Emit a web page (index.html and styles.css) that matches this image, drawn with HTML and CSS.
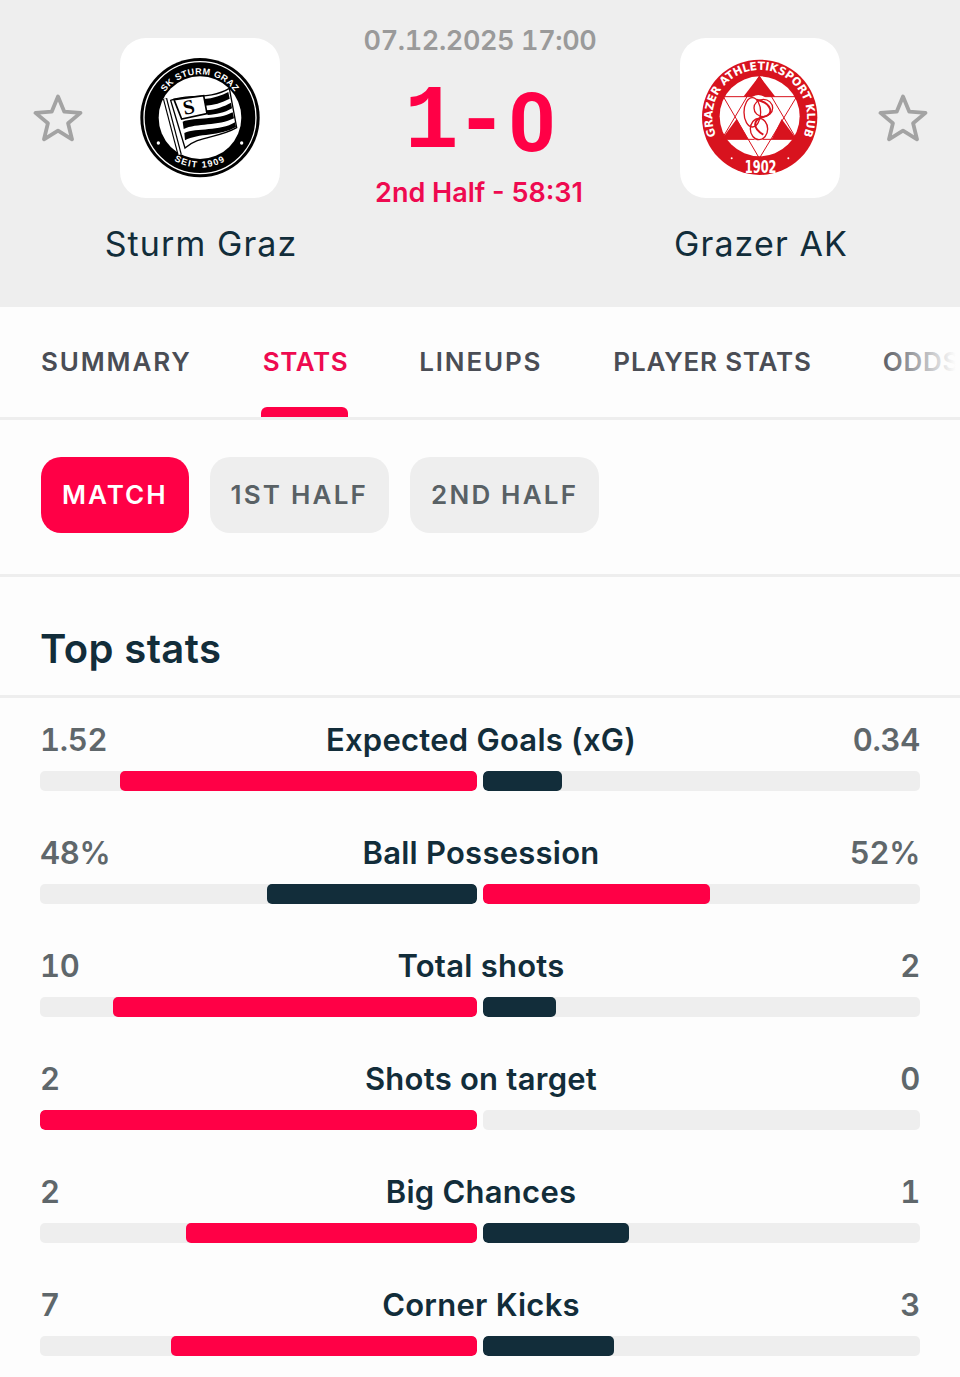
FILE: index.html
```html
<!DOCTYPE html>
<html lang="en">
<head>
<meta charset="utf-8">
<title>Sturm Graz - Grazer AK</title>
<link rel="stylesheet" href="styles.css">
</head>
<body>
<header class="match">
  <div class="fav fav-left">
    <svg class="star" viewBox="0 0 50 50"><path d="M25 3.5l6.3 15.2 16.2 1.2-12.4 10.4 3.9 16-14-8.6-14 8.6 3.9-16L2.500 19.900l16.200-1.200z"/></svg>
  </div>
  <div class="team">
    <div class="tile">
      <svg class="logo" viewBox="0 0 390 390">
        <defs>
          <path id="sturmTop" d="M65 194a130 130 0 1 1 260 0"/>
          <path id="sturmBottom" d="M45 194a150 150 0 0 0 300 0"/>
        </defs>
        <circle cx="195" cy="194" r="179" fill="#000"/>
        <circle cx="195" cy="194" r="168" fill="none" stroke="#fff" stroke-width="4"/>
        <circle cx="195" cy="194" r="124" fill="#fff"/>
        <text class="sturm-text"><textPath href="#sturmTop" startOffset="50%" text-anchor="middle">SK STURM GRAZ</textPath></text>
        <text class="sturm-text sturm-text-low"><textPath href="#sturmBottom" startOffset="50%" text-anchor="middle">SEIT 1909</textPath></text>
        <circle cx="70" cy="270" r="5" fill="#fff"/>
        <circle cx="320" cy="270" r="5" fill="#fff"/>
        <path d="M107 142C150 122 225 142 283 106L305 224C250 256 190 248 150 285Z" fill="#fff" stroke="#000" stroke-width="4"/>
        <path d="M207 138C235 136 260 128 280 117L284 137C260 150 235 156 211 158Z"/>
        <path d="M214 172C242 170 268 160 288 149L291 166C268 180 243 184 218 186Z"/>
        <path d="M143 206C180 192 250 202 293 178L297 196C250 220 185 210 146 228Z"/>
        <path d="M148 240C185 224 255 236 300 208L303 222C255 250 190 240 150 262Z"/>
        <path d="M117 140L206 128L216 182L140 198Z" fill="#fff" stroke="#000" stroke-width="5"/>
        <text class="sturm-mark" x="162" y="183" transform="rotate(-12 162 165)">S</text>
        <path d="M90 137L134 305" stroke="#000" stroke-width="13"/>
        <path d="M90 137L134 305" stroke="#fff" stroke-width="6"/>
      </svg>
    </div>
    <div class="team-name">Sturm Graz</div>
  </div>
  <div class="centre">
    <div class="date">07.12.2025 17:00</div>
    <div class="score"><span class="score-mono">1-</span><span class="score-zero">0</span></div>
    <div class="status">2nd Half - 58:31</div>
  </div>
  <div class="team">
    <div class="tile">
      <svg class="logo" viewBox="0 0 390 390">
        <defs>
          <path id="gakRing" d="M62 245A142 142 0 1 1 326 245"/>
        </defs>
        <circle cx="194" cy="193" r="173" fill="#d8131e"/>
        <circle cx="194" cy="190" r="120" fill="#fff"/>
        <text class="gak-text"><textPath href="#gakRing" startOffset="50%" text-anchor="middle" textLength="560" lengthAdjust="spacingAndGlyphs">GRAZER ATHLETIKSPORT KLUB</textPath></text>
        <text class="gak-year" x="197" y="360" textLength="95" lengthAdjust="spacingAndGlyphs">1902</text>
        <circle cx="110" cy="316" r="3" fill="#fff"/>
        <circle cx="280" cy="316" r="3" fill="#fff"/>
        <path d="M193 69L241 131H145Z" fill="#d8131e"/>
        <path d="M80 259L125 198L160 259Z" fill="#d8131e"/>
        <path d="M305 259L260 198L230 259Z" fill="#d8131e"/>
        <path d="M85 131H305L193 316Z" fill="none" stroke="#d8131e" stroke-width="3"/>
        <path d="M193 69L80 259H305Z" fill="none" stroke="#d8131e" stroke-width="3"/>
        <ellipse cx="190" cy="194" rx="46" ry="68" fill="#fff"/>
        <ellipse cx="172" cy="178" rx="25" ry="44" fill="none" stroke="#d8131e" stroke-width="4"/>
        <ellipse cx="205" cy="165" rx="28" ry="26" fill="none" stroke="#d8131e" stroke-width="4"/>
        <ellipse cx="192" cy="228" rx="26" ry="32" fill="none" stroke="#d8131e" stroke-width="4"/>
        <path d="M185 140C230 150 240 185 205 192C175 198 170 225 205 245" fill="none" stroke="#d8131e" stroke-width="6"/>
      </svg>
    </div>
    <div class="team-name">Grazer AK</div>
  </div>
  <div class="fav fav-right">
    <svg class="star" viewBox="0 0 50 50"><path d="M25 3.5l6.3 15.2 16.2 1.2-12.4 10.4 3.9 16-14-8.600-14 8.600 3.900-16L2.500 19.900l16.200-1.200z"/></svg>
  </div>
</header>

<nav class="tabs">
  <a class="tab tab-wide">SUMMARY</a>
  <a class="tab tab-active">STATS</a>
  <a class="tab tab-wide">LINEUPS</a>
  <a class="tab">PLAYER STATS</a>
  <a class="tab">ODDS</a>
</nav>

<div class="periods">
  <span class="pill pill-active">MATCH</span>
  <span class="pill">1ST HALF</span>
  <span class="pill">2ND HALF</span>
</div>

<h2 class="section-title">Top stats</h2>

<section class="stats">
  <div class="stat">
    <div class="stat-head"><span class="val">1.52</span><span class="name">Expected Goals (xG)</span><span class="val val-right">0.34</span></div>
    <div class="bars">
      <div class="track track-left"><div class="fill red" style="width:81.7%"></div></div>
      <div class="track"><div class="fill navy" style="width:18.1%"></div></div>
    </div>
  </div>
  <div class="stat">
    <div class="stat-head"><span class="val">48%</span><span class="name">Ball Possession</span><span class="val val-right">52%</span></div>
    <div class="bars">
      <div class="track track-left"><div class="fill navy" style="width:48%"></div></div>
      <div class="track"><div class="fill red" style="width:52%"></div></div>
    </div>
  </div>
  <div class="stat">
    <div class="stat-head"><span class="val">10</span><span class="name">Total shots</span><span class="val val-right">2</span></div>
    <div class="bars">
      <div class="track track-left"><div class="fill red" style="width:83.3%"></div></div>
      <div class="track"><div class="fill navy" style="width:16.7%"></div></div>
    </div>
  </div>
  <div class="stat">
    <div class="stat-head"><span class="val">2</span><span class="name">Shots on target</span><span class="val val-right">0</span></div>
    <div class="bars">
      <div class="track track-left"><div class="fill red" style="width:100%"></div></div>
      <div class="track"></div>
    </div>
  </div>
  <div class="stat">
    <div class="stat-head"><span class="val">2</span><span class="name">Big Chances</span><span class="val val-right">1</span></div>
    <div class="bars">
      <div class="track track-left"><div class="fill red" style="width:66.7%"></div></div>
      <div class="track"><div class="fill navy" style="width:33.3%"></div></div>
    </div>
  </div>
  <div class="stat">
    <div class="stat-head"><span class="val">7</span><span class="name">Corner Kicks</span><span class="val val-right">3</span></div>
    <div class="bars">
      <div class="track track-left"><div class="fill red" style="width:70%"></div></div>
      <div class="track"><div class="fill navy" style="width:30%"></div></div>
    </div>
  </div>
</section>
</body>
</html>
```
FILE: styles.css
```css
* { box-sizing: border-box; }
html, body { margin: 0; padding: 0; }
body {
  width: 960px;
  height: 1377px;
  overflow: hidden;
  background: #fdfdfd;
  font-family: Inter, "Liberation Sans", sans-serif;
  color: #122d3a;
}

/* Match header */
.match {
  height: 307px;
  background: #eeeeee;
  display: grid;
  grid-template-columns: 120px 160px 1fr 160px 120px;
  padding-top: 38px;
  align-items: start;
}
.fav { height: 160px; display: flex; align-items: center; }
.fav-left { justify-content: flex-start; padding-left: 33px; }
.fav-right { justify-content: flex-end; padding-right: 32px; }
.star { width: 50px; height: 50px; }
.star path { fill: none; stroke: #a3a3a3; stroke-width: 3.8; stroke-linejoin: round; }
.team { display: flex; flex-direction: column; align-items: center; }
.tile {
  width: 160px;
  height: 160px;
  background: #fff;
  border-radius: 26px;
  display: flex;
  align-items: center;
  justify-content: center;
}
.logo { width: 130px; height: 130px; display: block; }
.team-name {
  margin-top: 24px;
  padding-left: 2px;
  font-size: 34px;
  line-height: 44px;
  letter-spacing: 1.1px;
  white-space: nowrap;
  color: #122d3a;
}
.sturm-text { font-family: "Liberation Sans", sans-serif; font-size: 27px; font-weight: 700; letter-spacing: 1.5px; fill: #fff; }
.sturm-text-low { letter-spacing: 4px; }
.sturm-mark { font-family: "Liberation Serif", serif; font-size: 62px; font-weight: 700; fill: #000; text-anchor: middle; }
.gak-text { font-family: "DejaVu Sans", sans-serif; font-stretch: condensed; font-size: 34px; font-weight: 700; fill: #fff; }
.gak-year { font-family: "DejaVu Sans", sans-serif; font-stretch: condensed; font-size: 52px; font-weight: 700; fill: #fff; text-anchor: middle; }

.centre { display: flex; flex-direction: column; align-items: center; margin-top: -12px; }
.date {
  font-size: 27px;
  line-height: 30px;
  font-weight: 600;
  font-variant-numeric: tabular-nums;
  letter-spacing: -0.36px;
  color: #9a9a9a;
}
.score {
  margin-top: 23px;
  height: 88px;
  display: flex;
  align-items: center;
  color: #ff0046;
  line-height: 88px;
  font-weight: 700;
}
.score-mono {
  font-family: "Liberation Mono", monospace;
  font-size: 90px;
  letter-spacing: -4px;
}
.score-zero {
  margin-left: 4px;
  font-family: Roboto, sans-serif;
  font-size: 82px;
  font-weight: 700;
}
.status {
  margin-top: 9px;
  font-size: 27px;
  line-height: 34px;
  font-weight: 600;
  margin-left: -2px;
  color: #ee0a50;
}

/* Tabs */
.tabs {
  position: relative;
  height: 113px;
  display: flex;
  gap: 71px;
  padding-left: 41px;
  border-bottom: 3px solid #eeeeee;
  overflow: hidden;
}
.tabs::after {
  content: "";
  position: absolute;
  top: 0;
  right: 0;
  bottom: 0;
  width: 85px;
  background: linear-gradient(to right, rgba(253,253,253,0), #fdfdfd 95%);
}
.tab {
  position: relative;
  flex: none;
  height: 110px;
  line-height: 110px;
  font-size: 26px;
  font-weight: 600;
  letter-spacing: 0.8px;
  color: #4a4d55;
}
.tab-wide { letter-spacing: 1.85px; }
.tab-active { color: #ee0a50; letter-spacing: 0.6px; }
.tab-active::after {
  content: "";
  position: absolute;
  left: -2px;
  right: 0;
  bottom: 0;
  height: 10px;
  border-radius: 6px 6px 0 0;
  background: #ff0046;
}

/* Period pills */
.periods {
  height: 157px;
  display: flex;
  gap: 21px;
  padding: 37px 41px 0;
  border-bottom: 3px solid #eeeeee;
}
.pill {
  height: 76px;
  padding: 0 21px;
  border-radius: 20px;
  background: #eeeeee;
  font-size: 26px;
  font-weight: 600;
  line-height: 76px;
  letter-spacing: 2.2px;
  color: #596165;
}
.pill-active { background: #ff0046; color: #fff; letter-spacing: 2px; }

/* Stats */
.section-title {
  margin: 0;
  height: 121px;
  padding: 48px 0 0 40px;
  font-size: 40px;
  line-height: 48px;
  font-weight: 600;
  letter-spacing: 0.4px;
  color: #122d3a;
  border-bottom: 3px solid #eeeeee;
}
.stats { display: flex; flex-direction: column; gap: 41px; padding: 21px 40px 0; }
.stat { display: flex; flex-direction: column; gap: 12px; }
.stat-head {
  height: 40px;
  padding-top: 1px;
  display: grid;
  grid-template-columns: 1fr auto 1fr;
  align-items: center;
  font-size: 31px;
  line-height: 38px;
}
.val { font-weight: 600; color: #5f676b; font-variant-numeric: tabular-nums; letter-spacing: -0.3px; }
.val-right { text-align: right; }
.name { font-weight: 600; color: #122d3a; font-size: 31px; letter-spacing: 0.25px; padding-left: 2px; }
.bars { display: flex; gap: 6px; }
.track {
  flex: 1;
  height: 20px;
  border-radius: 5px;
  background: #eeeeee;
  display: flex;
  overflow: hidden;
}
.track-left { justify-content: flex-end; }
.fill { height: 100%; border-radius: 5px; }
.red { background: #ff0046; }
.navy { background: #122d3a; }
```
